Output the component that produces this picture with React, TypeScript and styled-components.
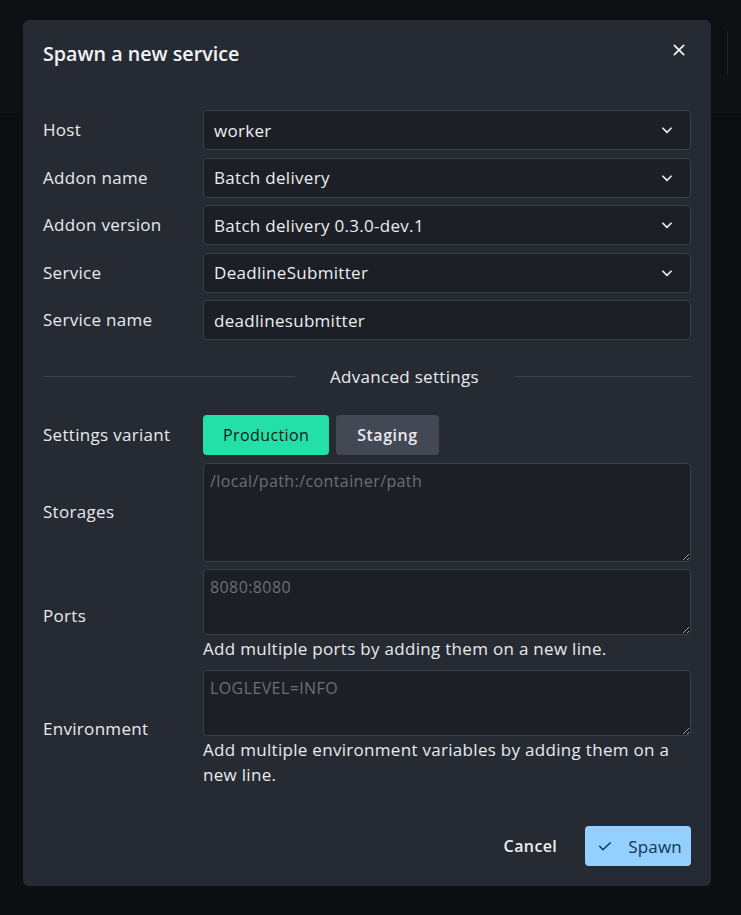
import React from 'react';
import styled, { createGlobalStyle } from 'styled-components';

const GlobalStyle = createGlobalStyle`
  html, body {
    margin: 0;
    padding: 0;
    background: #101215;
    font-family: "Open Sans", "Noto Sans", sans-serif;
  }
  * { box-sizing: border-box; }
`;

const Page = styled.div`
  position: relative;
  width: 741px;
  height: 915px;
  overflow: hidden;
  background: #101215;
`;

const TopBar = styled.div`
  height: 113px;
  display: flex;
  justify-content: flex-end;
  align-items: flex-start;
  padding: 31px 13px 0 0;
  background: #121519;
  border-bottom: 1px solid #16191d;
`;

const TopDivider = styled.div`
  width: 1px;
  height: 44px;
  background: #2a2e35;
`;

const Overlay = styled.div`
  position: absolute;
  inset: 0;
  background: rgba(8, 9, 11, 0.35);
  padding: 20px 0 0 23px;
`;

const Dialog = styled.div`
  width: 688px;
  height: 866px;
  background: #262b33;
  border-radius: 6px;
  display: flex;
  flex-direction: column;
  color: #e8eaed;
`;

const Header = styled.div`
  display: flex;
  justify-content: space-between;
  align-items: flex-start;
  padding: 20px 20px 0 20px;
`;

const Title = styled.h2`
  margin: 0;
  font-size: 19.7px;
  line-height: 28px;
  font-weight: 600;
  color: #f1f3f5;
`;

const CloseButton = styled.button`
  background: none;
  border: none;
  padding: 0;
  width: 24px;
  height: 20px;
  display: flex;
  align-items: center;
  justify-content: center;
  color: #f1f3f5;
  cursor: pointer;
`;

const Body = styled.div`
  flex: 1;
  padding: 42px 20px 0 20px;
`;

const Form = styled.div`
  display: grid;
  grid-template-columns: 160px 1fr;
  row-gap: 7.5px;
  align-items: center;
`;

const Label = styled.div`
  font-size: 17px;
  letter-spacing: 0.3px;
  line-height: 24px;
  color: #e8eaed;
`;

const Field = styled.div`
  display: flex;
  flex-direction: column;
`;

const SelectBox = styled.div`
  height: 40px;
  display: flex;
  align-items: center;
  justify-content: space-between;
  padding: 0 16px 0 10px;
  background: #1c1f25;
  border: 1px solid #3a3f48;
  border-radius: 4px;
  font-size: 17px;
  letter-spacing: 0.3px;
  color: #eceef1;
`;

const TextInput = styled.input`
  height: 40px;
  padding: 0 10px;
  background: #1c1f25;
  border: 1px solid #3a3f48;
  border-radius: 4px;
  font-family: inherit;
  font-size: 17px;
  letter-spacing: 0.3px;
  color: #eceef1;
  outline: none;
`;

const TextArea = styled.textarea<{ $h: number }>`
  height: ${(p) => p.$h}px;
  padding: 5px 6px;
  background: #1c1f25;
  border: 1px solid #3a3f48;
  border-radius: 4px;
  font-family: inherit;
  font-size: 16px;
  letter-spacing: 0.4px;
  line-height: 24px;
  color: #eceef1;
  outline: none;
  resize: vertical;
  &::placeholder {
    color: #6b7078;
  }
`;

const Help = styled.div`
  margin-top: 1px;
  padding: 0 20px 1px 0;
  font-size: 17px;
  letter-spacing: 0.3px;
  line-height: 25px;
  color: #e8eaed;
`;

const Divider = styled.div`
  grid-column: 1 / -1;
  display: grid;
  grid-template-columns: 249fr auto 175fr;
  align-items: center;
  column-gap: 35px;
  margin: 17px 0 19px 0;
  font-size: 17px;
  letter-spacing: 0.3px;
  line-height: 24px;
  color: #e8eaed;
  &::before, &::after {
    content: '';
    height: 1px;
    background: #3d424a;
  }
`;

const VariantRow = styled.div`
  display: flex;
  gap: 7px;
`;

const VariantButton = styled.button<{ $active?: boolean }>`
  height: 40px;
  padding: 0 ${(p) => (p.$active ? '20px' : '21px')};
  border: none;
  border-radius: 4px;
  font-family: inherit;
  font-size: 16px;
  letter-spacing: ${(p) => (p.$active ? '0.4px' : '0.5px')};
  font-weight: ${(p) => (p.$active ? 500 : 600)};
  background: ${(p) => (p.$active ? '#23e0a9' : '#434855')};
  color: ${(p) => (p.$active ? '#0d1a15' : '#e8eaed')};
  cursor: pointer;
`;

const Footer = styled.div`
  display: flex;
  justify-content: flex-end;
  align-items: center;
  gap: 15px;
  padding: 0 20px 20px 20px;
`;

const GhostButton = styled.button`
  height: 40px;
  padding: 0 13px;
  background: none;
  border: none;
  font-family: inherit;
  font-size: 16px;
  letter-spacing: 0.4px;
  font-weight: 600;
  color: #eef0f2;
  cursor: pointer;
`;

const PrimaryButton = styled.button`
  height: 40px;
  padding: 0 9px 0 12px;
  display: flex;
  align-items: center;
  gap: 15px;
  background: #93cfff;
  border: none;
  border-radius: 4px;
  font-family: inherit;
  font-size: 17px;
  letter-spacing: 0.2px;
  color: #0f3552;
  cursor: pointer;
`;

const Chevron = () => (
  <svg width="14" height="14" viewBox="0 0 24 24" fill="none" stroke="#e8eaed" strokeWidth="3" strokeLinecap="round" strokeLinejoin="round">
    <path d="M5 9l7 7 7-7" />
  </svg>
);

const Select = ({ value }: { value: string }) => (
  <SelectBox>
    <span>{value}</span>
    <Chevron />
  </SelectBox>
);

export default function App() {
  return (
    <Page>
      <GlobalStyle />
      <TopBar>
        <TopDivider />
      </TopBar>
      <Overlay>
        <Dialog>
          <Header>
            <Title>Spawn a new service</Title>
            <CloseButton>
              <svg width="16" height="16" viewBox="0 0 24 24" fill="none" stroke="currentColor" strokeWidth="2.6" strokeLinecap="round">
                <path d="M5 5l14 14M19 5L5 19" />
              </svg>
            </CloseButton>
          </Header>
          <Body>
            <Form>
              <Label>Host</Label>
              <Select value="worker" />
              <Label>Addon name</Label>
              <Select value="Batch delivery" />
              <Label>Addon version</Label>
              <Select value="Batch delivery 0.3.0-dev.1" />
              <Label>Service</Label>
              <Select value="DeadlineSubmitter" />
              <Label>Service name</Label>
              <TextInput defaultValue="deadlinesubmitter" />

              <Divider>Advanced settings</Divider>

              <Label>Settings variant</Label>
              <VariantRow>
                <VariantButton $active>Production</VariantButton>
                <VariantButton>Staging</VariantButton>
              </VariantRow>

              <Label>Storages</Label>
              <TextArea $h={99} placeholder="/local/path:/container/path" />

              <Label>Ports</Label>
              <Field>
                <TextArea $h={66} placeholder="8080:8080" />
                <Help>Add multiple ports by adding them on a new line.</Help>
              </Field>

              <Label>Environment</Label>
              <Field>
                <TextArea $h={66} placeholder="LOGLEVEL=INFO" />
                <Help>Add multiple environment variables by adding them on a new line.</Help>
              </Field>
            </Form>
          </Body>
          <Footer>
            <GhostButton>Cancel</GhostButton>
            <PrimaryButton>
              <svg width="16" height="16" viewBox="0 0 24 24" fill="none" stroke="currentColor" strokeWidth="2.2" strokeLinecap="round" strokeLinejoin="round">
                <path d="M4 12.5l5 5L20 7" />
              </svg>
              Spawn
            </PrimaryButton>
          </Footer>
        </Dialog>
      </Overlay>
    </Page>
  );
}
